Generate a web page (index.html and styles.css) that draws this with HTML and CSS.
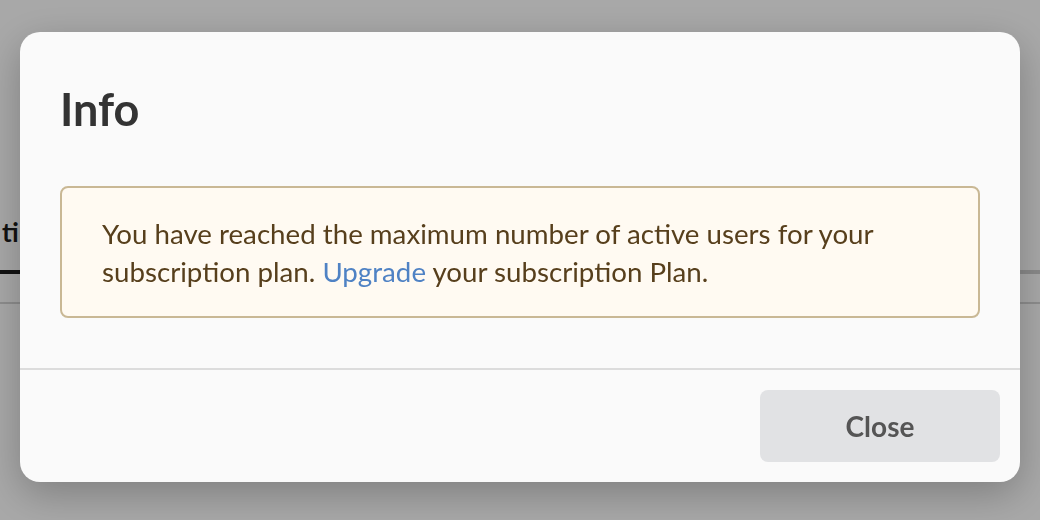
FILE: index.html
```html
<!DOCTYPE html>
<html lang="en">
<head>
<meta charset="utf-8">
<title>Info</title>
<link rel="stylesheet" href="styles.css">
</head>
<body>
<div class="page">
  <div class="tabs">
    <div class="tab active">ti</div>
    <div class="tab-rest"></div>
  </div>
  <div class="subline"></div>
</div>
<div class="overlay">
  <div class="modal" role="dialog" aria-labelledby="modal-title">
    <div class="modal-header">
      <h1 class="modal-title" id="modal-title">Info</h1>
    </div>
    <div class="modal-body">
      <div class="notice">You have reached the maximum number of active users for your subscription plan. <a class="notice-link" href="#">Upgrade</a> your subscription Plan.</div>
    </div>
    <div class="modal-footer">
      <button class="btn-close" type="button">Close</button>
    </div>
  </div>
</div>
</body>
</html>
```
FILE: styles.css
```css
html, body {
  margin: 0;
  padding: 0;
  height: 100%;
}
body {
  font-family: Lato, "Open Sans", sans-serif;
  background: #ffffff;
  overflow: hidden;
}
.page {
  padding-top: 216px;
}
.tabs {
  display: flex;
  align-items: flex-end;
}
.tab {
  font-weight: 700;
  font-size: 26px;
  line-height: 32px;
  color: #1b1b1b;
  padding: 0 20px 22px 2px;
  border-bottom: 4px solid #1b1b1b;
}
.tab-rest {
  flex: 1;
  border-bottom: 4px solid #d0d0d0;
}
.subline {
  margin-top: 28px;
  height: 2px;
  background: #d6d6d6;
}
.overlay {
  position: fixed;
  inset: 0;
  background: rgba(0, 0, 0, 0.34);
  display: flex;
  justify-content: center;
  align-items: flex-start;
  padding-top: 32px;
}
.modal {
  width: 1000px;
  height: 450px;
  box-sizing: border-box;
  background: #fafafa;
  border-radius: 20px;
  box-shadow: 0 12px 40px rgba(0, 0, 0, 0.25);
  display: flex;
  flex-direction: column;
}
.modal-header {
  padding: 52px 40px 0;
}
.modal-title {
  margin: 0;
  font-size: 45px;
  line-height: 50px;
  font-weight: 700;
  color: #333333;
}
.modal-body {
  padding: 52px 40px 50px;
  border-bottom: 2px solid #dcdcdc;
}
.notice {
  background: #fffaf2;
  border: 2px solid #c9b895;
  border-radius: 8px;
  padding: 27px 40px 25px;
  font-size: 27.7px;
  line-height: 38px;
  color: #573f1c;
}
.notice-link {
  color: #4f82c4;
  text-decoration: none;
}
.modal-footer {
  display: flex;
  justify-content: flex-end;
  padding: 20px 20px;
}
.btn-close {
  width: 240px;
  height: 72px;
  border: none;
  border-radius: 8px;
  background: #e1e2e4;
  color: #555555;
  font-family: Lato, "Open Sans", sans-serif;
  font-weight: 700;
  font-size: 28px;
  cursor: pointer;
}
```
